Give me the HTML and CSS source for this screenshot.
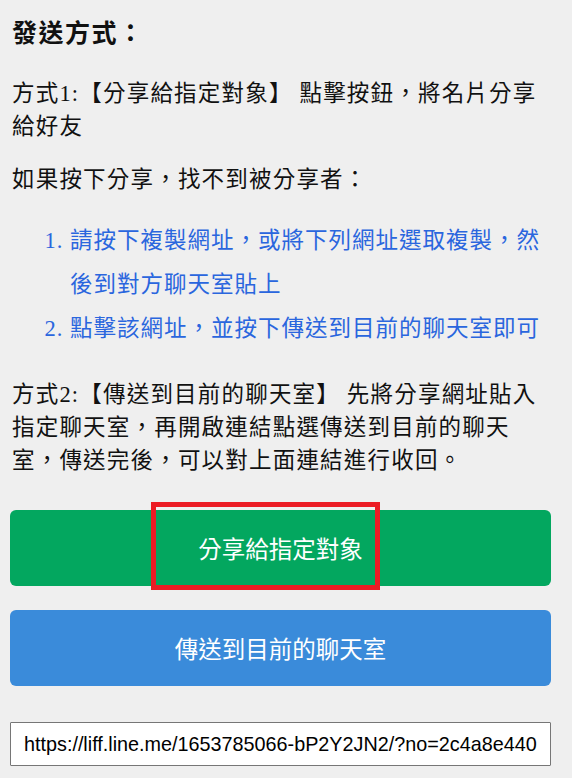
FILE: index.html
```html
<!DOCTYPE html>
<html lang="zh-Hant-TW">
<head>
<meta charset="utf-8">
<title>發送方式</title>
<link rel="stylesheet" href="styles.css">
</head>
<body>
<div class="page">
  <h2 class="title">發送方式：</h2>
  <p class="text first">方式1:【分享給指定對象】 點擊按鈕，將名片分享給好友</p>
  <p class="text second">如果按下分享，找不到被分享者：</p>
  <ol class="steps">
    <li>請按下複製網址，或將下列網址選取複製，然後到對方聊天室貼上</li>
    <li>點擊該網址，並按下傳送到目前的聊天室即可</li>
  </ol>
  <p class="text third">方式2:【傳送到目前的聊天室】 先將分享網址貼入指定聊天室，再開啟連結點選傳送到目前的聊天室，傳送完後，可以對上面連結進行收回。</p>
  <button class="btn btn-green" type="button">分享給指定對象<span class="highlight"></span></button>
  <button class="btn btn-blue" type="button">傳送到目前的聊天室</button>
  <input class="url" type="text" value="https://liff.line.me/1653785066-bP2Y2JN2/?no=2c4a8e440" readonly>
</div>
</body>
</html>
```
FILE: styles.css
```css
html, body {
  margin: 0;
  padding: 0;
  background: #efefef;
}
.page {
  display: flex;
  flex-direction: column;
  padding: 15px 21px 0 10px;
  font-family: "Liberation Serif", "Noto Sans CJK TC", serif;
  color: #111;
}
.title {
  margin: 0;
  padding-left: 2px;
  font-family: "Noto Sans CJK TC", sans-serif;
  font-size: 25px;
  letter-spacing: 1.5px;
  line-height: 32px;
  font-weight: bold;
}
.text {
  margin: 0;
  padding-left: 2px;
  font-size: 22.5px;
  letter-spacing: 1.2px;
  line-height: 33px;
}
.first { margin-top: 30px; }
.second { margin-top: 20px; }
.steps {
  margin: 23px 0 0 0;
  padding-left: 60px;
  font-size: 22.5px;
  letter-spacing: 1px;
  line-height: 44px;
  color: #2a66de;
}
.third { margin-top: 27px; }
.btn {
  position: relative;
  display: flex;
  align-items: center;
  justify-content: center;
  width: 100%;
  height: 76px;
  border: none;
  border-radius: 6px;
  color: #fff;
  font-family: "Noto Sans CJK TC", sans-serif;
  font-size: 23.5px;
  padding: 0;
}
.btn-green {
  margin-top: 33px;
  background: #03a75f;
}
.btn-blue {
  margin-top: 24px;
  background: #3a8bda;
}
.highlight {
  position: absolute;
  left: 141px;
  top: -8px;
  width: 229px;
  height: 88px;
  box-sizing: border-box;
  border: 5px solid #ec1c24;
}
.url {
  margin-top: 36px;
  box-sizing: border-box;
  width: 100%;
  height: 44px;
  border: 1px solid #767676;
  border-radius: 1px;
  background: #fff;
  padding: 0 8px 0 13px;
  font-family: "Liberation Sans", Arial, sans-serif;
  font-size: 19.8px;
  color: #000;
}
```
